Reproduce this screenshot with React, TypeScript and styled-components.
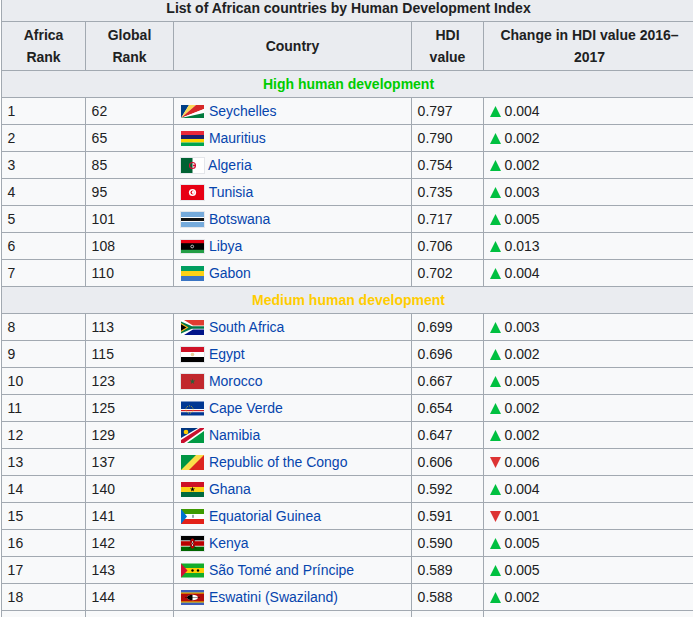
import React from "react";
import styled, { createGlobalStyle } from "styled-components";

const Global = createGlobalStyle`
  html, body { margin: 0; padding: 0; background: #fff; overflow: hidden; height: 617px; }
  body { font-family: "Liberation Sans", Arial, sans-serif; font-size: 14px; line-height: 22px; color: #202122; }
`;

const Table = styled.table`
  border-collapse: collapse;
  table-layout: fixed;
  width: 694px;
  margin: -6px 0 0 1px;
  background: #f8f9fa;
  color: #202122;
`;
const Col = styled.col<{ $w: number }>`
  width: ${(p) => p.$w}px;
`;
const Heading = styled.th`
  border: 1px solid #a2a9b1;
  background: #eaecf0;
  padding: 2px 5.6px;
  text-align: center;
  font-weight: bold;
`;
const Band = styled(Heading)<{ $tone: string }>`
  color: ${(p) => p.$tone};
`;
const Cell = styled.td`
  border: 1px solid #a2a9b1;
  padding: 2px 5.6px;
  height: 22px;
`;
const Link = styled.a`
  color: #0645ad;
  text-decoration: none;
`;
const FlagSvg = styled.svg`
  display: inline-block;
  vertical-align: middle;
  margin: 0 0 0 0.4px;
  width: 25px;
  height: 17px;
  position: relative;
  top: -1px;
`;
const Trend = styled.svg`
  display: inline-block;
  vertical-align: baseline;
  width: 11px;
  height: 11px;
  margin-right: 4px;
  position: relative;
  top: 1px;
`;

const flags: Record<string, React.ReactNode> = {
  sc: (
    <>
      <rect x="1" y="2" width="23" height="13" fill="#fff" />
      <path d="M1 15V2h8z" fill="#003f87" />
      <path d="M1 15 9 2h7z" fill="#fcd856" />
      <path d="M1 15 16 2h8v4z" fill="#d62828" />
      <path d="M1 15 24 6v4z" fill="#fff" />
      <path d="M1 15 24 10v5z" fill="#007a3d" />
    </>
  ),
  mu: (
    <>
      <rect x="1" y="1" width="23" height="4" fill="#ea2839" />
      <rect x="1" y="5" width="23" height="4" fill="#1a206d" />
      <rect x="1" y="9" width="23" height="3.5" fill="#ffd500" />
      <rect x="1" y="12.5" width="23" height="3.5" fill="#00a551" />
    </>
  ),
  dz: (
    <>
      <rect x="0.5" y="0.5" width="24" height="16" fill="#fff" stroke="#e4e6ea" />
      <rect x="1" y="1" width="11.5" height="15" fill="#006233" />
      <circle cx="12.5" cy="8.5" r="3" fill="none" stroke="#d21034" strokeWidth="1.1" />
      <circle cx="14" cy="8.5" r="1.1" fill="#d21034" />
    </>
  ),
  tn: (
    <>
      <rect x="0.5" y="0.5" width="24" height="16" fill="#e70013" stroke="#e4e6ea" />
      <circle cx="12.5" cy="8.5" r="3.6" fill="#fff" />
      <circle cx="12.5" cy="8.5" r="2" fill="#e70013" />
      <circle cx="13.2" cy="8.5" r="1.4" fill="#fff" />
    </>
  ),
  bw: (
    <>
      <rect x="0.5" y="0.5" width="24" height="16" fill="#75aadb" stroke="#e4e6ea" />
      <rect x="1" y="6" width="23" height="5" fill="#fff" />
      <rect x="1" y="7" width="23" height="3" fill="#111" />
    </>
  ),
  ly: (
    <>
      <rect x="0.5" y="1.5" width="24" height="14" fill="#000" stroke="#e4e6ea" />
      <rect x="1" y="2" width="23" height="3.2" fill="#e70013" />
      <rect x="1" y="11.8" width="23" height="3.2" fill="#239e46" />
      <circle cx="12.2" cy="8.5" r="1.4" fill="none" stroke="#fff" strokeWidth="0.7" />
    </>
  ),
  ga: (
    <>
      <rect x="1" y="1" width="23" height="5" fill="#009e60" />
      <rect x="1" y="6" width="23" height="5" fill="#fcd116" />
      <rect x="1" y="11" width="23" height="5" fill="#3a75c4" />
    </>
  ),
  za: (
    <>
      <rect x="1" y="1" width="23" height="7.5" fill="#e03c31" />
      <rect x="1" y="8.5" width="23" height="7.5" fill="#001489" />
      <path d="M1 1h3l9 5.5h11v4H13L4 16H1z" fill="#fff" />
      <path d="M1 2.5 12 7.2h12v2.6H12L1 14.5z" fill="#007749" />
      <path d="M1 4 8.5 8.5 1 13z" fill="#ffb81c" />
      <path d="M1 5.3 6.5 8.5 1 11.7z" fill="#000" />
    </>
  ),
  eg: (
    <>
      <rect x="0.5" y="0.5" width="24" height="16" fill="#fff" stroke="#e4e6ea" />
      <rect x="1" y="1" width="23" height="5" fill="#ce1126" />
      <rect x="1" y="11" width="23" height="5" fill="#000" />
      <circle cx="12.5" cy="8.5" r="1.8" fill="#e6cf9a" />
    </>
  ),
  ma: (
    <>
      <rect x="0.5" y="0.5" width="24" height="16" fill="#c1272d" stroke="#e4e6ea" />
      <path d="M12.5 5.5 14.2 11 9.7 7.6h5.6L10.8 11z" fill="#24613a" />
    </>
  ),
  cv: (
    <>
      <rect x="1" y="1.5" width="23" height="14" fill="#003893" />
      <rect x="1" y="9" width="23" height="3.2" fill="#fff" />
      <rect x="1" y="10" width="23" height="1.2" fill="#cf2027" />
      <circle cx="9.5" cy="9.5" r="3.6" fill="none" stroke="#f7d116" strokeWidth="0.8" strokeDasharray="1 1" />
    </>
  ),
  na: (
    <>
      <rect x="1" y="1" width="23" height="15" fill="#009a44" />
      <path d="M1 1h23L1 16z" fill="#003580" />
      <path d="M1 16v-5L18 1h6v3L7 16z" fill="#fff" />
      <path d="M1 16v-3L20 1h4v1L4 16z" fill="#c8102e" />
      <circle cx="6" cy="5" r="2.3" fill="#ffcd00" />
    </>
  ),
  cg: (
    <>
      <rect x="1" y="1" width="23" height="15" fill="#fbde4a" />
      <path d="M1 1h15L1 16z" fill="#009543" />
      <path d="M24 1v15H9z" fill="#dc241f" />
    </>
  ),
  gh: (
    <>
      <rect x="1" y="1" width="23" height="5" fill="#ce1126" />
      <rect x="1" y="6" width="23" height="5" fill="#fcd116" />
      <rect x="1" y="11" width="23" height="5" fill="#006b3f" />
      <path d="M12.5 5.6 14 10.6 9.9 7.5h5.2L11 10.6z" fill="#000" />
    </>
  ),
  gq: (
    <>
      <rect x="1" y="1" width="23" height="5" fill="#3e9a00" />
      <rect x="1" y="6" width="23" height="5" fill="#fff" />
      <rect x="1" y="11" width="23" height="5" fill="#e32118" />
      <path d="M1 1 7 8.5 1 16z" fill="#0073ce" />
      <rect x="12" y="6.8" width="2" height="3" fill="#9aa" />
    </>
  ),
  ke: (
    <>
      <rect x="0.5" y="0.5" width="24" height="16" fill="#fff" stroke="#e4e6ea" />
      <rect x="1" y="1" width="23" height="4.4" fill="#000" />
      <rect x="1" y="6.2" width="23" height="4.6" fill="#bb0000" />
      <rect x="1" y="11.6" width="23" height="4.4" fill="#006600" />
      <ellipse cx="12.5" cy="8.5" rx="2.2" ry="5" fill="#bb0000" />
      <ellipse cx="12.5" cy="8.5" rx="0.8" ry="2.6" fill="#fff" />
      <path d="M9 3.5l7 10M16 3.5l-7 10" stroke="#000" strokeWidth="0.5" />
    </>
  ),
  st: (
    <>
      <rect x="1" y="1.5" width="23" height="14" fill="#12ad2b" />
      <rect x="1" y="6" width="23" height="5" fill="#ffce00" />
      <path d="M1 1.5 7.5 8.5 1 15.5z" fill="#d21034" />
      <circle cx="12.5" cy="8.5" r="1.2" fill="#000" />
      <circle cx="18" cy="8.5" r="1.2" fill="#000" />
    </>
  ),
  sz: (
    <>
      <rect x="1" y="1" width="23" height="15" fill="#3e5eb9" />
      <rect x="1" y="3.5" width="23" height="10" fill="#ffd900" />
      <rect x="1" y="4.5" width="23" height="8" fill="#b10c0c" />
      <ellipse cx="12.5" cy="8.5" rx="5.5" ry="2.8" fill="#fff" />
      <path d="M12.5 5.7c-3 0-5.5 1.4-5.5 2.8s2.5 2.8 5.5 2.8z" fill="#000" />
      <path d="M5 8.5h15" stroke="#000" strokeWidth="0.4" />
    </>
  ),
};

const FlagIcon = ({ code }: { code: string }) => (
  <FlagSvg viewBox="0 0 25 17" aria-hidden="true">
    {flags[code]}
  </FlagSvg>
);

const Change = ({ value, down }: { value: string; down?: boolean }) => (
  <>
    <Trend viewBox="0 0 11 11" aria-hidden="true">
      {down ? <path d="M0 0h11L5.5 11z" fill="#dd3333" /> : <path d="M0 11h11L5.5 0z" fill="#00c040" />}
    </Trend>
    {value}
  </>
);

type Row = [number, number, string, string, string, string, boolean?];
const high: Row[] = [
  [1, 62, "sc", "Seychelles", "0.797", "0.004"],
  [2, 65, "mu", "Mauritius", "0.790", "0.002"],
  [3, 85, "dz", "Algeria", "0.754", "0.002"],
  [4, 95, "tn", "Tunisia", "0.735", "0.003"],
  [5, 101, "bw", "Botswana", "0.717", "0.005"],
  [6, 108, "ly", "Libya", "0.706", "0.013"],
  [7, 110, "ga", "Gabon", "0.702", "0.004"],
];
const medium: Row[] = [
  [8, 113, "za", "South Africa", "0.699", "0.003"],
  [9, 115, "eg", "Egypt", "0.696", "0.002"],
  [10, 123, "ma", "Morocco", "0.667", "0.005"],
  [11, 125, "cv", "Cape Verde", "0.654", "0.002"],
  [12, 129, "na", "Namibia", "0.647", "0.002"],
  [13, 137, "cg", "Republic of the Congo", "0.606", "0.006", true],
  [14, 140, "gh", "Ghana", "0.592", "0.004"],
  [15, 141, "gq", "Equatorial Guinea", "0.591", "0.001", true],
  [16, 142, "ke", "Kenya", "0.590", "0.005"],
  [17, 143, "st", "São Tomé and Príncipe", "0.589", "0.005"],
  [18, 144, "sz", "Eswatini (Swaziland)", "0.588", "0.002"],
];

const Rows = ({ rows }: { rows: Row[] }) => (
  <>
    {rows.map(([rank, global, code, name, hdi, change, down]) => (
      <tr key={rank}>
        <Cell>{rank}</Cell>
        <Cell>{global}</Cell>
        <Cell>
          <FlagIcon code={code} /> <Link href="#">{name}</Link>
        </Cell>
        <Cell>{hdi}</Cell>
        <Cell>
          <Change value={change} down={down} />
        </Cell>
      </tr>
    ))}
  </>
);

export default function App() {
  return (
    <>
      <Global />
      <Table>
        <colgroup>
          <Col $w={84} />
          <Col $w={88} />
          <Col $w={238} />
          <Col $w={72} />
          <Col $w={212} />
        </colgroup>
        <tbody>
          <tr>
            <Heading colSpan={5}>List of African countries by Human Development Index</Heading>
          </tr>
          <tr>
            <Heading>Africa Rank</Heading>
            <Heading>Global Rank</Heading>
            <Heading>Country</Heading>
            <Heading>HDI value</Heading>
            <Heading>Change in HDI value 2016–2017</Heading>
          </tr>
          <tr>
            <Band colSpan={5} $tone="#00cc00">High human development</Band>
          </tr>
          <Rows rows={high} />
          <tr>
            <Band colSpan={5} $tone="#ffcc00">Medium human development</Band>
          </tr>
          <Rows rows={medium} />
          <tr>
            <Cell />
            <Cell />
            <Cell />
            <Cell />
            <Cell />
          </tr>
        </tbody>
      </Table>
    </>
  );
}
